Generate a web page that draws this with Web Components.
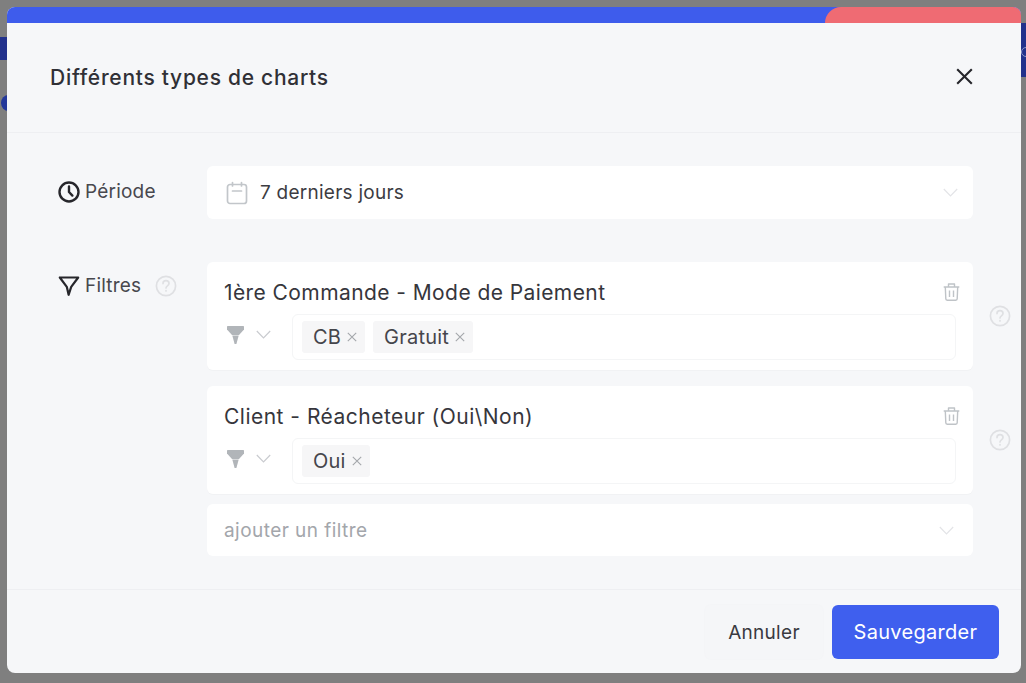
<!DOCTYPE html>
<html lang="fr"><head><meta charset="utf-8"><title>Différents types de charts</title>
<style>
html,body{margin:0;height:683px;overflow:hidden}
body{background:#7f7f7f;font-family:Inter,"Open Sans",sans-serif;color:#2e2e33;box-sizing:border-box;padding:7px 5px 10px 7px;position:relative}
.bg{position:absolute;background:#22318c}
</style></head><body>
<div class="bg" style="left:0;top:37px;width:7px;height:23px"></div>
<div class="bg" style="left:1px;top:95px;width:15px;height:16px;border-radius:50%;background:#24389a"></div>
<div class="bg" style="right:0;top:23px;width:5px;height:54px"></div>
<div class="bg" style="left:1021px;top:47px;width:8px;height:8px;border:1.5px solid #8d97c8;border-radius:50%;background:none"></div>
<chart-modal heading="Différents types de charts">
  <form-row label="Période" icon="clock">
    <select-box icon="calendar">7 derniers jours</select-box>
  </form-row>
  <form-row label="Filtres" icon="filter" help style="margin-top:43px">
    <filter-card title="1ère Commande - Mode de Paiement" tags="CB|Gratuit"></filter-card>
    <filter-card title="Client - Réacheteur (Oui\Non)" tags="Oui" style="margin-top:16px;--ls:.49px"></filter-card>
    <select-box placeholder style="margin-top:10px">ajouter un filtre</select-box>
  </form-row>
</chart-modal>
<script>
const I={
 clock:'<svg width="22" height="22" viewBox="0 0 22 22" fill="none" stroke="#26262b" stroke-width="2.4" stroke-linecap="round" stroke-linejoin="round"><circle cx="11" cy="11" r="9.5"/><path d="M11 5.5V11l3.4 3.6"/></svg>',
 filter:'<svg width="22" height="22" viewBox="0 0 22 22" fill="none" stroke="#26262b" stroke-width="2.2" stroke-linejoin="round"><path d="M1.800 2.500H20.200L13.200 11.800 10.600 19.800 8.800 11.800z"/></svg>',
 calendar:'<svg width="22" height="24" viewBox="0 0 22 24" fill="none" stroke="#c2c6ca" stroke-width="1.7" stroke-linecap="round"><rect x="1.500" y="3.500" width="19" height="19" rx="2.500"/><path d="M6.500 1.500v3.500M15.500 1.500v3.500M6.500 10h9"/></svg>',
 chev:'<svg width="15" height="9" viewBox="0 0 15 9" fill="none" stroke="currentColor" stroke-width="1.2"><path d="M.8 1l6.700 6.800L14.200 1"/></svg>',
 funnel:'<svg width="17" height="18" viewBox="0 0 17 18" fill="#b1b5b9"><path d="M1 0h15c.6 0 1 .4 1 1v2.500L12 9H5L0 3.500V1c0-.6.4-1 1-1z"/><path d="M5.300 9.500h6.400L9.400 18H7.600z"/></svg>',
 trash:'<svg width="17" height="18" viewBox="0 0 17 18" fill="none" stroke="#bfc3c7" stroke-width="1.4" stroke-linejoin="round"><path d="M.7 4h15.600M5.500 4V1h6v3M2.300 4l.5 11.800c0 .8.600 1.400 1.400 1.400h8.600c.8 0 1.400-.6 1.400-1.400L14.700 4M6.500 7.500v6.500M10.500 7.500v6.500"/></svg>',
 help:'<svg width="22" height="22" viewBox="0 0 22 22" fill="none" stroke="#dfe0e3" stroke-width="1.7" stroke-linecap="round"><circle cx="11" cy="11" r="9.600"/><path d="M8 8.600c0-1.800 1.400-2.900 3-2.900s3 1.100 3 2.700c0 2.400-3 2.400-3 4.600M11 15.600v.3"/></svg>',
 x:'<svg width="17" height="17" viewBox="0 0 17 17" fill="none" stroke="#26262b" stroke-width="2.1"><path d="M1.200 1.200l14.600 14.600M15.800 1.200L1.200 15.800"/></svg>',
 tagx:'<svg width="10" height="10" viewBox="0 0 10 10" fill="none" stroke="#a4a7ab" stroke-width="1.1"><path d="M.8.8l8.400 8.400M9.200.8L.8 9.200"/></svg>'
};
function def(n,html){customElements.define(n,class extends HTMLElement{constructor(){super();this.attachShadow({mode:'open'})}
 connectedCallback(){this.shadowRoot.innerHTML=typeof html==='function'?html(this):html}})}

def('chart-modal',e=>`<style>
:host{display:flex;flex-direction:column;width:1014px;height:666px;background:#f6f7f9;border-radius:8px;overflow:hidden;position:relative}
.bar{height:16px;background:#3e5cec;flex:none;display:flex;justify-content:flex-end}
.bar i{display:block;width:196px;background:#ef6b73;border-radius:18px 0 0 0}
header{height:110px;box-sizing:border-box;flex:none;border-bottom:1px solid #eeeff2;display:flex;align-items:center;justify-content:space-between;padding:0 48px 0 43px}
h1{margin:0;font:450 21px/1 Inter,sans-serif;letter-spacing:.72px;color:#303036}
h1+span{display:flex;margin-top:-2px}
main{flex:1;padding:33px 0 0 51px}
footer{height:84px;flex:none;box-sizing:border-box;border-top:1px solid #eeeff2;display:flex;align-items:flex-start;justify-content:flex-end;gap:9px;padding:15px 22px 0 0}
</style><div class="bar"><i></i></div>
<header><h1>${e.getAttribute('heading')}</h1><span>${I.x}</span></header>
<main><slot></slot></main>
<footer><modal-button>Annuler</modal-button><modal-button primary>Sauvegarder</modal-button></footer>`);

def('modal-button',`<style>
:host{display:flex;align-items:center;justify-content:center;height:54px;width:118px;border-radius:6px;font:400 19px/1 Inter,sans-serif;letter-spacing:.3px;color:#3a3a40;background:#f5f6f8;box-shadow:0 0 0 1px #f4f5f7}
:host([primary]){width:167px;background:#3f5fee;color:#fff;box-shadow:none;font-size:20px}
</style><slot></slot>`);

def('form-row',e=>`<style>
:host{display:grid;grid-template-columns:149px 766px;position:relative}
.l{display:flex;align-items:center;align-self:start;height:22px;font:400 19px/22px Inter,sans-serif;letter-spacing:.2px;color:#48484e;gap:5px;margin-top:${e.hasAttribute('help')?'13px':'15px'}}
.l svg{display:block}.l span{display:flex}
.h{margin-left:9px}
</style><div class="l"><span>${I[e.getAttribute('icon')]}</span>${e.getAttribute('label')}${e.hasAttribute('help')?`<span class="h">${I.help}</span>`:''}</div><div><slot></slot></div>`);

def('select-box',e=>`<style>
:host{display:flex;align-items:center;height:53px;box-sizing:border-box;background:#fff;border-radius:6px;padding:0 15px 0 17px;gap:12px;font:400 19px/1 Inter,sans-serif;letter-spacing:.25px;color:#3c3c42}
:host([placeholder]){height:52px;color:#a3a6ab;letter-spacing:.45px;padding-right:19px}
.t{flex:1}.c{color:#e3e4e7;display:flex}.i{display:flex}
</style>${e.getAttribute('icon')?`<span class="i" style="margin-left:2px">${I[e.getAttribute('icon')]}</span>`:''}<span class="t"><slot></slot></span><span class="c">${I.chev}</span>`);

def('filter-card',e=>`<style>
:host{display:block;position:relative;height:108px;box-sizing:border-box;background:#fff;border-radius:6px;padding:17px 17px 0;box-shadow:0 1px 0 #f1f2f4}
.top{display:flex;justify-content:space-between;align-items:center;height:27px;margin-right:-4px}
.top svg{margin-top:-2px}
.t{font:400 21px/27px Inter,sans-serif;letter-spacing:var(--ls,.42px);color:#36363c}
.r{display:flex;align-items:center;margin-top:8px;height:46px}
.f{width:68px;display:flex;align-items:center;gap:12px;padding-left:3px;box-sizing:border-box;margin-top:-5px}
.c{color:#c9cbcf;display:flex}
.b{flex:1;height:46px;box-sizing:border-box;border:1px solid #f4f5f6;border-radius:6px;display:flex;gap:8px;padding:6px 9px}
.h{position:absolute;left:782px;top:43px;display:flex}
.tag{display:flex;align-items:center;gap:6px;height:32px;padding:0 8px 0 11px;background:#f6f6f7;border-radius:3px;font:400 20px/1 Inter,sans-serif;letter-spacing:.2px;color:#45454b}
</style><div class="top"><span class="t">${e.getAttribute('title')}</span>${I.trash}</div>
<div class="r"><span class="f">${I.funnel}<span class="c">${I.chev}</span></span><div class="b">${e.getAttribute('tags').split('|').map(t=>`<span class="tag">${t}${I.tagx}</span>`).join('')}</div></div>
<span class="h">${I.help}</span>`);
</script>
</body></html>
